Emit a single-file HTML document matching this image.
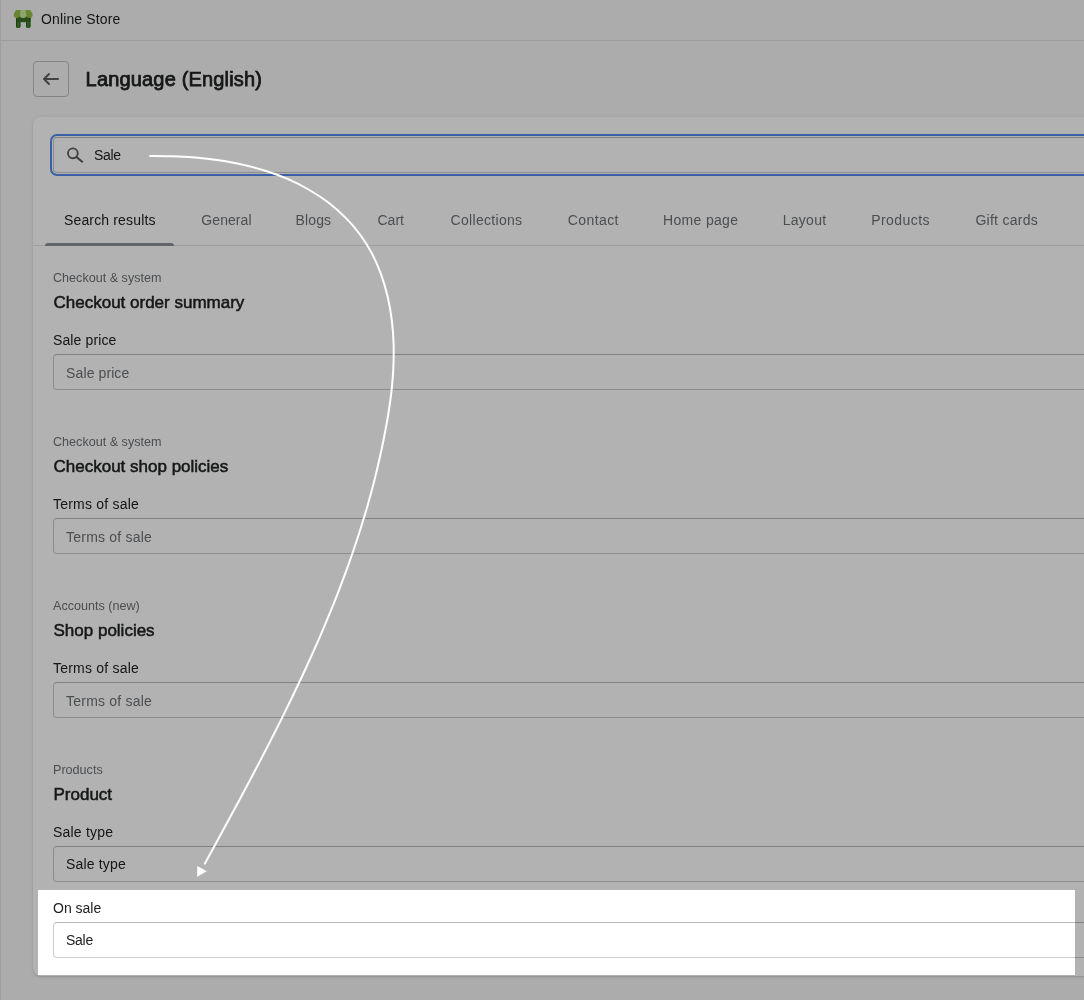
<!DOCTYPE html>
<html lang="en">
<head>
<meta charset="utf-8">
<title>Language (English)</title>
<style>
*{box-sizing:border-box;margin:0;padding:0}
html,body{width:1084px;height:1000px;overflow:hidden}
body{background:#f6f6f7;font-family:"Liberation Sans",Arial,sans-serif;color:#202223;position:relative;font-size:14px}
.abs{position:absolute}
.topbar{left:0;top:0;width:1084px;height:41px;border-bottom:1px solid #e1e3e5}
.topbar .t{position:absolute;left:41px;top:11px;font-size:14px;line-height:16px;letter-spacing:.13px;color:#202223;white-space:nowrap}
.leftline{left:0;top:0;width:1px;height:1000px;background:#e1e3e5}
.back{left:33px;top:61px;width:36px;height:36px;border:1px solid #bcbfc2;border-radius:4px}
.title{left:85.6px;top:65px;font-size:20px;line-height:28px;color:#202223;white-space:nowrap;-webkit-text-stroke:.75px #202223;letter-spacing:.17px}
.card{left:33px;top:117px;width:1100px;height:859px;background:#fff;border-radius:8px;box-shadow:0 0 5px rgba(23,24,24,.05),0 1px 2px rgba(0,0,0,.15)}
.ring{left:50px;top:134px;width:1100px;height:42px;border:2px solid #548bea;border-radius:7px}
.inp{left:53px;width:1100px;height:36px;border:1px solid #c9cbcd;border-top-color:#b6b9bc;border-radius:4px;background:#fff}
.inp span{position:absolute;left:12.1px;top:9.6px;letter-spacing:.1px;font-size:14px;line-height:16px;white-space:nowrap;color:#6d7175}
.inp.v span{color:#202223;left:12px;top:9.2px}
.tab{top:212px;font-size:14px;line-height:16px;color:#6d7175;white-space:nowrap}
.tab.on{color:#202223}
.tabline{left:33px;top:245px;width:1100px;height:1px;background:#e1e3e5}
.tabbar{left:45px;top:243px;width:129px;height:3px;background:#8c9196;border-radius:3px 3px 0 0}
.sub{left:53px;font-size:12.6px;line-height:16px;color:#6d7175;white-space:nowrap}
.h{left:53.5px;font-size:17px;line-height:24px;color:#202223;white-space:nowrap;-webkit-text-stroke:.5px #202223}
.lbl{left:53px;font-size:14px;line-height:20px;color:#202223;white-space:nowrap;letter-spacing:.12px}
.overlay{left:0;top:0;width:1084px;height:1000px;background:rgba(0,0,0,.3)}
.hl{left:38px;top:890px;width:1037px;height:85px;background:#fff;overflow:hidden}
</style>
</head>
<body>
<div id="root" class="abs" style="left:0;top:0;width:1084px;height:1000px;will-change:transform">
<div class="abs leftline"></div>
<div class="abs topbar">
<svg class="abs" style="left:12px;top:6px" width="26" height="26" viewBox="12 6 26 26"><path d="M16 16.5H30.4V26.8a1.2 1.2 0 0 1-1.2 1.2H27.2a1.2 1.2 0 0 1-1.2-1.2V22.2H20.4V26.8a1.2 1.2 0 0 1-1.2 1.2H17.2a1.2 1.2 0 0 1-1.2-1.2z" fill="#44822f"/><path d="M16 16.5H30.4V21.8H16z" fill="#3b6a26"/><path d="M16 17h.8v9.8h-.8zM19.6 22.2h.8v4.6h-.8zM29.6 17h.8v9.8h-.8zM26 22.2h.8v4.6h-.8z" fill="#1a590e"/><path d="M16.6 9.9H29.7a1 1 0 0 1 .9.5L32.6 14v.8a3.15 3.2 0 0 1-6.3 0a3.15 3.2 0 0 1-6.3 0a3.15 3.2 0 0 1-6.3 0V14l2-3.6a1 1 0 0 1 .9-.5z" fill="#93c045"/><path d="M20.7 9.9h4.9l.7 4.9a3.15 3.2 0 0 1-6.3 0z" fill="#c9ec9f"/></svg>
<div class="t">Online Store</div>
</div>
<div class="abs back"><svg class="abs" style="left:7px;top:7px" width="20" height="20" viewBox="0 0 20 20"><path d="M17 9H5.414l3.293-3.293a.999.999 0 1 0-1.414-1.414l-5 5a.999.999 0 0 0 0 1.414l5 5a.997.997 0 0 0 1.414 0 .999.999 0 0 0 0-1.414L5.414 11H17a1 1 0 1 0 0-2z" fill="#5c5f62"/></svg></div>
<div class="abs title">Language (English)</div>
<div class="abs card"></div>
<div class="abs ring"></div>
<div class="abs inp v" style="top:137px"><span style="left:40px;top:9.4px;letter-spacing:-.3px">Sale</span></div>
<svg class="abs" style="left:60px;top:140px" width="30" height="30" viewBox="60 140 30 30"><circle cx="72.85" cy="153.3" r="4.9" fill="none" stroke="#5c5f62" stroke-width="1.9"/><path d="M76.6 157.1L82.2 161.7" stroke="#5c5f62" stroke-width="2.1" stroke-linecap="round"/></svg>
<div class="abs tab on" style="left:64px;letter-spacing:.15px">Search results</div>
<div class="abs tab" style="left:201.3px;letter-spacing:.08px">General</div>
<div class="abs tab" style="left:295.6px;letter-spacing:.1px">Blogs</div>
<div class="abs tab" style="left:377.5px">Cart</div>
<div class="abs tab" style="left:450.6px;letter-spacing:.3px">Collections</div>
<div class="abs tab" style="left:567.8px;letter-spacing:.4px">Contact</div>
<div class="abs tab" style="left:663px;letter-spacing:.33px">Home page</div>
<div class="abs tab" style="left:782.7px;letter-spacing:.28px">Layout</div>
<div class="abs tab" style="left:871.2px;letter-spacing:.45px">Products</div>
<div class="abs tab" style="left:975.4px;letter-spacing:.27px">Gift cards</div>
<div class="abs tabline"></div>
<div class="abs tabbar"></div>

<div class="abs sub" style="top:270px">Checkout &amp; system</div>
<div class="abs h" style="top:291px">Checkout order summary</div>
<div class="abs lbl" style="top:330px">Sale price</div>
<div class="abs inp" style="top:354px"><span>Sale price</span></div>

<div class="abs sub" style="top:434px">Checkout &amp; system</div>
<div class="abs h" style="top:455px">Checkout shop policies</div>
<div class="abs lbl" style="top:494px;letter-spacing:.22px">Terms of sale</div>
<div class="abs inp" style="top:518px"><span style="letter-spacing:.2px">Terms of sale</span></div>

<div class="abs sub" style="top:598px">Accounts (new)</div>
<div class="abs h" style="top:619px">Shop policies</div>
<div class="abs lbl" style="top:658px;letter-spacing:.22px">Terms of sale</div>
<div class="abs inp" style="top:682px"><span style="letter-spacing:.2px">Terms of sale</span></div>

<div class="abs sub" style="top:762px">Products</div>
<div class="abs h" style="top:783px">Product</div>
<div class="abs lbl" style="top:822px;letter-spacing:.2px">Sale type</div>
<div class="abs inp v" style="top:846px"><span style="letter-spacing:.17px">Sale type</span></div>
<div class="abs inp v" style="top:922px"></div>

<div class="abs overlay"></div>
<div class="abs hl">
<div class="abs lbl" style="left:15px;top:8px;letter-spacing:0">On sale</div>
<div class="abs inp v" style="left:15px;top:32px"><span style="letter-spacing:-.25px">Sale</span></div>
</div>
<svg class="abs" style="left:0;top:0" width="1084" height="1000" viewBox="0 0 1084 1000"><path d="M150.1 155.9C153.7 156.0 164.7 156.0 172.2 156.3C179.8 156.6 187.5 157.0 195.3 157.6C203.0 158.3 210.9 159.2 218.8 160.3C226.6 161.5 234.5 162.8 242.3 164.6C250.0 166.3 257.8 168.3 265.3 170.7C272.9 173.1 280.4 175.8 287.6 178.9C294.8 182.1 301.9 185.6 308.6 189.5C315.3 193.4 321.9 197.7 328.0 202.3C334.1 207.0 339.9 212.0 345.2 217.4C350.6 222.7 355.6 228.4 360.0 234.5C364.5 240.5 368.5 246.9 372.0 253.6C375.5 260.2 378.5 267.3 381.1 274.4C383.7 281.6 385.8 289.0 387.6 296.5C389.4 304.1 390.7 311.8 391.7 319.5C392.7 327.3 393.3 335.2 393.6 343.0C393.8 350.9 393.7 358.8 393.4 366.6C393.1 374.5 392.4 382.3 391.6 390.1C390.7 397.9 389.6 405.7 388.4 413.4C387.2 421.1 385.7 428.8 384.2 436.5C382.8 444.1 381.1 451.7 379.4 459.3C377.7 466.9 375.9 474.5 374.0 482.0C372.0 489.5 370.0 497.0 367.9 504.4C365.8 511.9 363.5 519.3 361.2 526.7C358.9 534.0 356.5 541.4 354.0 548.7C351.5 556.0 349.0 563.3 346.3 570.6C343.7 577.9 340.9 585.1 338.1 592.3C335.4 599.5 332.5 606.7 329.5 613.9C326.6 621.0 323.6 628.2 320.5 635.3C317.5 642.4 314.3 649.5 311.1 656.5C308.0 663.6 304.7 670.7 301.4 677.7C298.1 684.7 294.8 691.7 291.4 698.7C288.0 705.7 284.6 712.6 281.2 719.6C277.7 726.5 274.2 733.5 270.7 740.4C267.1 747.3 263.6 754.2 260.0 761.1C256.4 768.0 252.8 774.9 249.1 781.7C245.5 788.6 241.8 795.4 238.2 802.3C234.5 809.1 230.8 815.9 227.1 822.8C223.4 829.6 219.7 836.4 216.0 843.2C212.3 850.0 206.7 860.2 204.9 863.6" fill="none" stroke="#fff" stroke-width="2" stroke-linecap="round"/><path d="M197.2 866v10.8l9.6-5.5z" fill="#fff"/></svg>
</div>
</body>
</html>
